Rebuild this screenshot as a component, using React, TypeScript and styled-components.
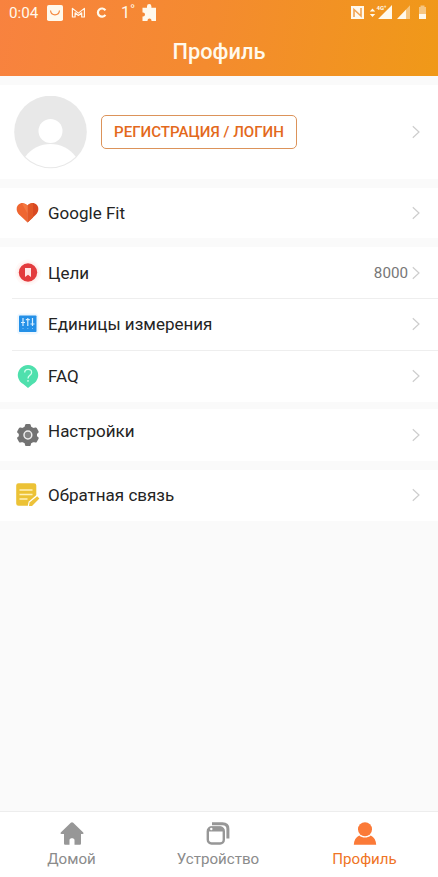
import React from "react";
import styled, { createGlobalStyle } from "styled-components";

const GlobalStyle = createGlobalStyle`
  * { box-sizing: border-box; }
  html, body { margin: 0; padding: 0; }
  body { font-family: Roboto, "Noto Sans", sans-serif; background: #fafafa; }
  svg { display: block; flex: none; }
`;

const Screen = styled.div`
  width: 438px;
  height: 877px;
  display: flex;
  flex-direction: column;
  background: #fafafa;
  overflow: hidden;
`;

const Header = styled.header`
  height: 76px;
  flex: none;
  display: flex;
  flex-direction: column;
  background: linear-gradient(100deg, #f8823f 0%, #f48b2f 48%, #f09918 100%);
  color: #fff9ec;
`;

const StatusBar = styled.div`
  height: 26px;
  display: flex;
  justify-content: space-between;
  padding: 0 10px 0 9px;
`;

const StatusGroup = styled.div`
  display: flex;
  align-items: center;
`;

const StatusText = styled.span<{ $width: number; $size?: number; $indent?: number }>`
  width: ${(p) => p.$width}px;
  padding-left: ${(p) => p.$indent ?? 0}px;
  font-size: ${(p) => p.$size ?? 15.2}px;
  line-height: 26px;
  white-space: nowrap;
`;

const Title = styled.h1`
  margin: 0;
  height: 50px;
  line-height: 52px;
  text-align: center;
  font-size: 21.800px;
  font-weight: 500;
`;

const Content = styled.main`
  flex: 1;
  display: flex;
  flex-direction: column;
  gap: 9px;
  padding-top: 9px;
`;

const Account = styled.section`
  height: 94px;
  display: flex;
  align-items: center;
  padding: 0 18px 0 14px;
  background: #fff;
`;

const LoginButton = styled.button`
  width: 196px;
  height: 34px;
  margin: 0 auto 0 14px;
  padding: 1px 0 0;
  border: 1px solid #dc935a;
  border-radius: 5px;
  background: #fff;
  color: #e3691c;
  font: 500 15.1px/31px Roboto, sans-serif;
  text-align: center;
  white-space: nowrap;
`;

const Group = styled.section<{ $trim?: boolean }>`
  background: #fff;
  margin-bottom: ${(p) => (p.$trim ? -2 : 0)}px;
`;

const Row = styled.div<{ $height: number; $lift?: boolean }>`
  height: ${(p) => p.$height}px;
  display: flex;
  align-items: center;
  padding: 0 18px ${(p) => (p.$lift ? 2 : 0)}px 15px;
`;

const Divider = styled.div`
  height: 1px;
  margin-left: 12px;
  background: #eee;
`;

const IconSlot = styled.div`
  width: 26px;
  height: 26px;
  flex: none;
  margin-right: 7px;
`;

const Label = styled.span<{ $raise?: number }>`
  flex: 1;
  margin-bottom: ${(p) => p.$raise ?? 0}px;
  font-size: 17px;
  line-height: 24px;
  color: #242424;
  white-space: nowrap;
`;

const Value = styled.span`
  margin-right: 4px;
  font-size: 15.2px;
  color: #777;
`;

const TabBar = styled.nav`
  height: 66px;
  flex: none;
  display: grid;
  grid-template-columns: 143px 150px 143px;
  border-top: 1px solid #ededed;
  background: #fff;
`;

const Tab = styled.div<{ $active?: boolean }>`
  display: flex;
  flex-direction: column;
  align-items: center;
  padding-top: 9px;
  color: ${(p) => (p.$active ? "#fb7a38" : "#979797")};
`;

const TabLabel = styled.span<{ $active?: boolean }>`
  margin-top: 4px;
  font-size: 15.1px;
  line-height: 20px;
  color: ${(p) => (p.$active ? "#ef7424" : "#8b8b8b")};
`;

const Chevron = () => (
  <svg width="8" height="14" viewBox="0 0 8 14" fill="none" stroke="#cdcdcd" strokeWidth="1.2">
    <path d="M.8 1.200 7 7 .8 12.800" />
  </svg>
);

const LeftStatusIcons = () => (
  <svg width="60" height="26" viewBox="0 0 60 26" fill="none">
    <rect x="0" y="5" width="16" height="16" rx="1.800" fill="#fff9ec" />
    <path d="M3.500 10.500c.8 5.800 8.200 5.800 9 0" stroke="#f5873b" strokeWidth="1.200" />
    <path d="M25.400 17V8.400l6 4.700 6-4.700V17h-2.700v-4.200l-3.300 2.700-3.300-2.700V17z" stroke="#fff9ec" strokeWidth="1.200" strokeLinejoin="round" />
    <path d="M58.400 10.300a4.100 4.100 0 1 0 0 4.600" stroke="#fff9ec" strokeWidth="2.200" />
  </svg>
);

const Puzzle = () => (
  <svg width="16" height="26" viewBox="0 0 16 26">
    <path fill="#fff9ec" d="M.5 7.800H5V6.200a2.200 2.200 0 0 1 4.400 0v1.600H14V21H9.500v-.5a2 2 0 0 0-4 0v.5h-5v-4.500H1a2 2 0 0 0 0-4H.5z" />
  </svg>
);

const Signals = () => (
  <svg width="78" height="26" viewBox="350 0 78 26" fill="none">
    <rect x="351" y="6" width="13" height="13" fill="#fff9ec" />
    <path d="M354 17V9.500l7 6.500V8" stroke="#f2a452" strokeWidth="1.600" />
    <path d="m369.800 11.500 2.700-3 2.700 3zM369.800 14l2.700 3 2.700-3z" fill="#fff9ec" />
    <path d="M378 19 392 5v14zM397 19l9.500-10v10z" fill="#fff9ec" />
    <path d="M406.500 9l3.500-3.700V19h-3.500z" fill="#f7c57d" />
    <text x="376.500" y="9.500" fill="#fff9ec" fontSize="6" fontWeight="700" fontFamily="Roboto">4G⁺</text>
    <path d="M419 7h1.500V5.500h4V7h1.500v7h-7z" fill="#f6c682" />
    <path d="M419 14h7v5h-7z" fill="#fff9ec" />
  </svg>
);

const Avatar = () => (
  <svg width="73" height="73" viewBox="0 0 73 73">
    <circle cx="36.500" cy="36" r="36.300" fill="#e8e8e8" />
    <circle cx="36.500" cy="35" r="12" fill="#fff" />
    <path d="M11.300 60.800C23 43.800 50 43.800 61.700 60.800A35.600 35.600 0 0 1 11.300 60.800z" fill="#fff" />
  </svg>
);

const Heart = () => (
  <svg width="26" height="26" viewBox="0 0 26 26">
    <path d="M12.500 22.500 4 14.500C1 11.500 1 7.100 3.300 4.700 6 2.100 10 2.600 12.500 5.500z" fill="#ef6631" />
    <path d="M12.500 5.500C15 2.600 19 2.100 21.700 4.700 24 7.100 24 11.500 21 14.500l-8.500 8z" fill="#d94922" />
    <path d="M12.500 5.500c1.500-1.800 3.500-2.600 5.500-2.200v14.200l-5.500 5z" fill="#e25827" />
    <path d="M7 3.700c2.100-.2 4 .4 5.500 1.900v8z" fill="#f57840" />
  </svg>
);

const Goal = () => (
  <svg width="26" height="26" viewBox="0 0 26 26" overflow="visible">
    <circle cx="13" cy="12.500" r="13" fill="#fff9f8" />
    <circle cx="13" cy="12.500" r="11" fill="#fff0ee" />
    <circle cx="13" cy="12.500" r="9.200" fill="#e33b3d" />
    <path d="M10 8h6v9l-3-2.200L10 17z" fill="#ffe6e5" />
  </svg>
);

const Units = () => (
  <svg width="26" height="26" viewBox="0 0 26 26" overflow="visible">
    <rect x="2" y="2.500" width="21.500" height="21" rx="4" fill="#edf7ff" />
    <rect x="4" y="4.500" width="17.500" height="16.500" rx=".8" fill="#2490e7" />
    <path d="M8 7v8M12.800 7v8M17.500 7v8M6 11.500h4M10.800 8.700h4M15.500 13h4" stroke="#d8efff" strokeWidth="1.200" />
    <path d="M7.500 17.500h1M12.300 17.500h1M17 17.500h1" stroke="#7dc4f7" />
  </svg>
);

const Faq = () => (
  <svg width="26" height="26" viewBox="0 0 26 26" fill="none">
    <path d="M8.500 21.300A10.200 10.200 0 1 1 17.500 21.300L13 25z" fill="#4fe0ad" />
    <path d="M9.700 9.500c0-4.200 6.900-4.100 6.900-.1 0 2.900-3.600 2.800-3.600 6M13 17v1.700" stroke="#d5ffef" strokeWidth="1.300" />
  </svg>
);

const Gear = () => (
  <svg width="26" height="26" viewBox="0 0 26 26">
    <path fill="#737373" stroke="#737373" strokeWidth="2.400" strokeLinejoin="round" d="m11.300 3.200-.7 2.300-3.200 1.700-2.300-.6L3.300 9.800 5 11.500v3l-1.700 1.700 1.800 3.200 2.300-.6 3.200 1.700.7 2.300h3.200l.7-2.300 3.200-1.700 2.300.6 1.800-3.200-1.700-1.700v-3l1.700-1.700-1.800-3.200-2.300.6-3.200-1.700-.7-2.300z" />
    <circle cx="12.900" cy="13" r="3.900" fill="#858585" stroke="#eee" strokeWidth="1.500" />
  </svg>
);

const Feedback = () => (
  <svg width="26" height="26" viewBox="0 0 26 26" fill="none">
    <path d="M3.500 1.200h15.500a2.300 2.300 0 0 1 2.300 2.300v12L13.500 22v1.800h-10a2.300 2.300 0 0 1-2.300-2.300v-18a2.300 2.300 0 0 1 2.300-2.300z" fill="#ecc236" />
    <path d="M4.500 8h13M4.500 12.500h13M4.500 17h8" stroke="#fff1bb" strokeWidth="1.400" />
    <path d="m12.800 24 .8-4.300 8.500-7.200 3.700 3.200-9 8.300z" fill="#fff" />
    <path d="m14 24 .5-3.400 7.700-6.400 2.200 2.300-7.400 7.500z" fill="#edc23a" />
  </svg>
);

const Home = () => (
  <svg width="24" height="24" viewBox="0 0 24 24" fill="currentColor">
    <path d="M10.800 1.800a1.800 1.800 0 0 1 2.400 0L23 11.300c1 .9.700 1.700-.5 1.700H21v9.200c0 1-.5 1.500-1.500 1.500H14.500V19c0-2.500-5-2.500-5 0v4.700H5.500c-1 0-1.500-.5-1.500-1.500V13H1.700C.4 13 .1 12.200 1 11.300z" />
  </svg>
);

const Device = () => (
  <svg width="24" height="24" viewBox="0 0 24 24" fill="none" stroke="currentColor">
    <path d="M6 2.700h10.500c3.800 0 5.400 1.600 5.400 5V17.500" strokeWidth="3" />
    <rect x="1.800" y="6.500" width="16" height="16" rx="3.700" fill="#fff" strokeWidth="2.400" />
    <path d="M2 10V8.500Q2.500 6 5 6h9.500Q17 6.500 17.500 10z" fill="currentColor" />
    <circle cx="5.300" cy="8" r="1.200" fill="#fff" stroke="none" />
  </svg>
);

const Person = () => (
  <svg width="24" height="24" viewBox="0 0 24 24" fill="currentColor">
    <circle cx="12" cy="8.300" r="7" />
    <path d="M.8 23.700c.1-4.400 2.200-7.500 5.500-9.200 3.200 2.700 8.200 2.700 11.400 0 3.300 1.700 5.400 4.800 5.500 9.200z" />
  </svg>
);

type ItemProps = {
  icon: React.ReactNode;
  label: string;
  height: number;
  value?: string;
  raise?: number;
  lift?: boolean;
};

const Item = ({ icon, label, height, value, raise, lift }: ItemProps) => (
  <Row $height={height} $lift={lift}>
    <IconSlot>{icon}</IconSlot>
    <Label $raise={raise}>{label}</Label>
    {value && <Value>{value}</Value>}
    <Chevron />
  </Row>
);

export default function App() {
  return (
    <>
      <GlobalStyle />
      <Screen>
        <Header>
          <StatusBar>
            <StatusGroup>
              <StatusText $width={38}>0:04</StatusText>
              <LeftStatusIcons />
              <StatusText $width={35} $size={16} $indent={14}>1˚</StatusText>
              <Puzzle />
            </StatusGroup>
            <Signals />
          </StatusBar>
          <Title>Профиль</Title>
        </Header>
        <Content>
          <Account>
            <Avatar />
            <LoginButton>РЕГИСТРАЦИЯ / ЛОГИН</LoginButton>
            <Chevron />
          </Account>
          <Group>
            <Item icon={<Heart />} label="Google Fit" height={50} />
          </Group>
          <Group $trim>
            <Item icon={<Goal />} label="Цели" height={51} value="8000" />
            <Divider />
            <Item icon={<Units />} label="Единицы измерения" height={51} lift />
            <Divider />
            <Item icon={<Faq />} label="FAQ" height={51} lift />
          </Group>
          <Group>
            <Item icon={<Gear />} label="Настройки" height={52} raise={8} />
          </Group>
          <Group>
            <Item icon={<Feedback />} label="Обратная связь" height={51} lift />
          </Group>
        </Content>
        <TabBar>
          <Tab>
            <Home />
            <TabLabel>Домой</TabLabel>
          </Tab>
          <Tab>
            <Device />
            <TabLabel>Устройство</TabLabel>
          </Tab>
          <Tab $active>
            <Person />
            <TabLabel $active>Профиль</TabLabel>
          </Tab>
        </TabBar>
      </Screen>
    </>
  );
}
